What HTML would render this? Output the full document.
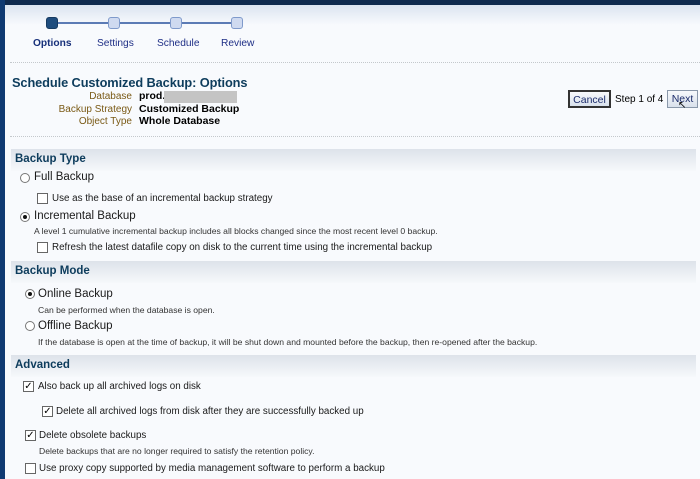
<!DOCTYPE html>
<html><head><meta charset="utf-8"><style>
*{margin:0;padding:0;box-sizing:border-box}
body{width:700px;height:479px;overflow:hidden;background:#f8fafd;font-family:"Liberation Sans",Tahoma,sans-serif;position:relative;color:#000}
.a{position:absolute;white-space:nowrap}
.top{left:0;top:0;width:700px;height:5px;background:#0f2a4e}
.lft{left:0;top:0;width:5px;height:479px;background:#0f3a72}
.grad{left:5px;top:5px;width:695px;height:20px;background:linear-gradient(#dbe4f0,#f8fafd)}
.dash{height:0;border-top:1px dotted #c4c8cc;left:10px;width:690px}
.dot{width:12px;height:12px;border-radius:3px;background:#cfdaf0;border:1px solid #7f9acb}
.line{height:2px;background:#5c7bb5;top:22px}
.tl{font-size:10.2px;color:#1f2f86;top:38px}
.lbl{font-size:10px;color:#7a5a16;text-align:right;width:132px;left:0}
.val{font-size:10.5px;font-weight:bold;left:139px}
.band{left:11px;width:685px;height:22px;background:linear-gradient(#dde2ea,#f6f8fb)}
.hd{font-size:11.5px;font-weight:bold;color:#0d3c5c;left:15px}
.t{font-size:11.5px;color:#1a1a1a}
.s{font-size:9.8px;color:#1a1a1a}
.d{font-size:8.6px;color:#333}
.rb{width:10px;height:10px;border-radius:50%;border:1px solid #777;background:#fff}
.rb.on::after{content:"";position:absolute;left:2px;top:2px;width:4px;height:4px;border-radius:50%;background:#111}
.cb{width:11px;height:11px;border:1px solid #666;background:#fff;font-size:10px;line-height:9px;text-align:center}
.btn{height:18px;border:1px solid #8a98aa;background:linear-gradient(#f7f9fc,#d9e1ec);font-size:10.5px;color:#1b2b6a;text-align:center;line-height:16px}
</style></head><body>
<div class="a top"></div><div class="a lft"></div><div class="a grad"></div>

<div class="a line" style="left:58px;width:176px"></div>
<div class="a dot" style="left:46px;top:17px;background:#1f4d7e;border-color:#163a60"></div>
<div class="a dot" style="left:108px;top:17px"></div>
<div class="a dot" style="left:170px;top:17px"></div>
<div class="a dot" style="left:231px;top:17px"></div>
<div class="a tl" style="left:33px;font-weight:bold;color:#17307a">Options</div>
<div class="a tl" style="left:97px">Settings</div>
<div class="a tl" style="left:157px">Schedule</div>
<div class="a tl" style="left:221px">Review</div>
<div class="a dash" style="top:62px"></div>

<div class="a" style="left:12px;top:75px;font-size:12.8px;font-weight:bold;color:#0d3c5c;letter-spacing:-0.1px">Schedule Customized Backup: Options</div>
<div class="a lbl" style="top:91px">Database</div><div class="a val" style="top:90px">prod.</div>
<div class="a" style="left:164px;top:91px;width:73px;height:12px;background:#c4c4c4"></div>
<div class="a lbl" style="top:104px">Backup Strategy</div><div class="a val" style="top:103px">Customized Backup</div>
<div class="a lbl" style="top:116px">Object Type</div><div class="a val" style="top:115px">Whole Database</div>
<div class="a btn" style="left:568px;top:90px;width:43px;border:2px solid #333">Cancel</div>
<div class="a" style="left:615px;top:94px;font-size:10px">Step 1 of 4</div>
<div class="a btn" style="left:667px;top:90px;width:31px">Next</div>
<div class="a" style="left:678px;top:100px;font-size:10px">&#8598;</div>
<div class="a dash" style="top:136px"></div>

<div class="a band" style="top:149px"></div>
<div class="a hd" style="top:153px">Backup Type</div>
<div class="a rb" style="left:20px;top:173px"></div><div class="a t" style="left:34px;top:171px">Full Backup</div>
<div class="a cb" style="left:37px;top:193px"></div><div class="a s" style="left:52px;top:193px">Use as the base of an incremental backup strategy</div>
<div class="a rb on" style="left:20px;top:212px"></div><div class="a t" style="left:34px;top:210px">Incremental Backup</div>
<div class="a d" style="left:34px;top:226px">A level 1 cumulative incremental backup includes all blocks changed since the most recent level 0 backup.</div>
<div class="a cb" style="left:37px;top:242px"></div><div class="a s" style="left:52px;top:242px">Refresh the latest datafile copy on disk to the current time using the incremental backup</div>

<div class="a band" style="top:261px"></div>
<div class="a hd" style="top:265px">Backup Mode</div>
<div class="a rb on" style="left:25px;top:289px"></div><div class="a t" style="left:38px;top:288px">Online Backup</div>
<div class="a d" style="left:38px;top:305px">Can be performed when the database is open.</div>
<div class="a rb" style="left:25px;top:321px"></div><div class="a t" style="left:38px;top:320px">Offline Backup</div>
<div class="a d" style="left:38px;top:337px">If the database is open at the time of backup, it will be shut down and mounted before the backup, then re-opened after the backup.</div>

<div class="a band" style="top:355px"></div>
<div class="a hd" style="top:359px">Advanced</div>
<div class="a cb" style="left:23px;top:381px">&#10003;</div><div class="a s" style="left:38px;top:381px">Also back up all archived logs on disk</div>
<div class="a cb" style="left:42px;top:406px">&#10003;</div><div class="a s" style="left:56px;top:406px">Delete all archived logs from disk after they are successfully backed up</div>
<div class="a cb" style="left:25px;top:430px">&#10003;</div><div class="a s" style="left:39px;top:430px">Delete obsolete backups</div>
<div class="a d" style="left:39px;top:446px">Delete backups that are no longer required to satisfy the retention policy.</div>
<div class="a cb" style="left:25px;top:463px"></div><div class="a s" style="left:39px;top:463px">Use proxy copy supported by media management software to perform a backup</div>
</body></html>
